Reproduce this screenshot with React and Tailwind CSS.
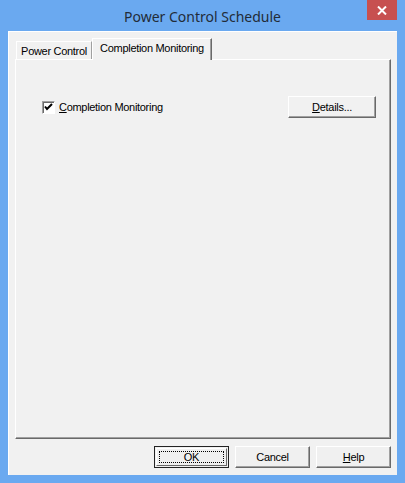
const raised =
  "border border-t-white border-l-white border-r-[#696969] border-b-[#696969] shadow-[inset_-1px_-1px_0_#a0a0a0]";

const Btn = ({ children, isDefault }) => (
  <button
    className={
      isDefault
        ? "w-[75px] h-[22px] border border-[#222] bg-[#f0f0f0] flex items-center justify-center p-[1px]"
        : `w-[75px] h-[22px] ${raised} bg-[#f0f0f0] flex items-center justify-center`
    }
  >
    {isDefault ? (
      <span className="w-full h-full border-t border-l border-white border-r border-b border-r-[#696969] border-b-[#696969] flex items-center justify-center p-[2px]">
        <span className="w-full h-full border border-dotted border-black flex items-center justify-center">
          {children}
        </span>
      </span>
    ) : (
      children
    )}
  </button>
);

export default function App() {
  return (
    <div className="w-[405px] h-[483px] bg-[#6aa9f0] flex flex-col px-2 pb-2 font-['Liberation_Sans',Arial,sans-serif] text-[11px] tracking-[-0.3px] text-black select-none">
      <div className="relative h-[31px] flex items-center justify-center">
        <span className="font-['Noto_Sans',sans-serif] text-[14px] tracking-normal text-[#222c38] pt-[1px]">
          Power Control Schedule
        </span>
        <div className="absolute right-0 top-0 w-[30px] h-[20px] bg-[#c75050] flex items-center justify-center">
          <svg width="10" height="9" viewBox="0 0 10 9">
            <path d="M1 0.5 L9 8.5 M9 0.5 L1 8.5" stroke="white" strokeWidth="2" />
          </svg>
        </div>
      </div>

      <div className="flex-1 bg-[#f1f1f1] border-t border-l border-white flex flex-col pl-[6px] pr-[6px] pt-[6px]">
        <div className="flex items-end h-[21px] pl-[1px]">
          <div className="h-[18px] w-[76px] border-t border-l border-white border-r border-r-[#a0a0a0] flex items-center justify-center">
            <span className="pt-[2px]">Power Control</span>
          </div>
          <div className="relative h-[22px] -mb-[1px] w-[120px] border-t border-l border-white border-r border-r-[#696969] shadow-[inset_-1px_0_0_#a0a0a0] bg-[#f1f1f1] flex items-center justify-center z-10">
            <span className="-mt-[3px]">Completion Monitoring</span>
          </div>
        </div>
        <div className={`h-[380px] w-[376px] ${raised} flex flex-col`}>
          <div className="flex items-center mt-[36px] pl-[26px] pr-[14px] h-[22px]">
            <span className="w-[13px] h-[13px] bg-white border border-t-[#a0a0a0] border-l-[#a0a0a0] border-r-white border-b-white shadow-[inset_1px_1px_0_#696969] flex items-center justify-center">
              <svg width="9" height="9" viewBox="0 0 9 9">
                <path d="M1 3.5 L3 6 L8 1" stroke="black" strokeWidth="2" fill="none" />
              </svg>
            </span>
            <span className="ml-[4px]">
              <u>C</u>ompletion Monitoring
            </span>
            <div className="flex-1" />
            <button className={`w-[88px] h-[22px] ${raised} bg-[#f1f1f1] flex items-center justify-center`}>
              <span>
                <u>D</u>etails...
              </span>
            </button>
          </div>
        </div>
        <div className="flex justify-end gap-[6px] mt-[7px]">
          <Btn isDefault>OK</Btn>
          <Btn>Cancel</Btn>
          <Btn>
            <span>
              <u>H</u>elp
            </span>
          </Btn>
        </div>
      </div>
    </div>
  );
}
